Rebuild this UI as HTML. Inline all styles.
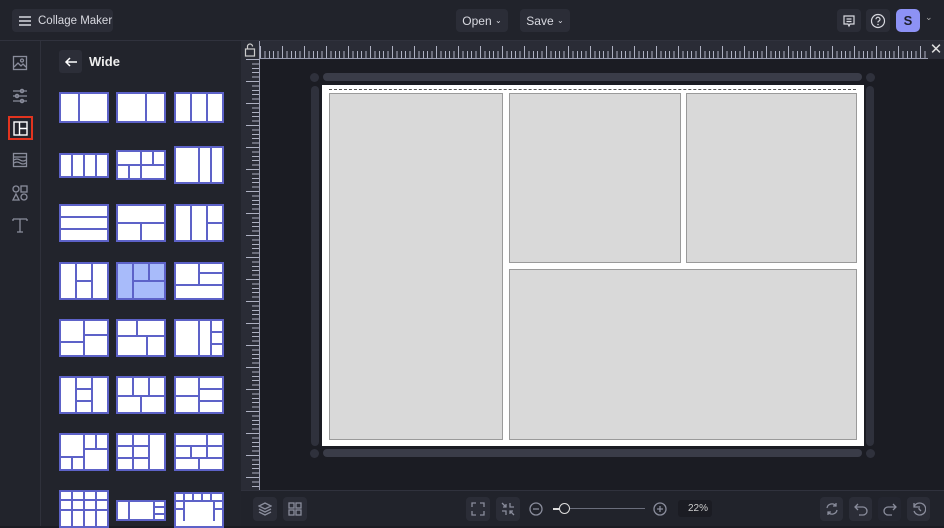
<!DOCTYPE html><html><head><meta charset="utf-8"><style>
*{margin:0;padding:0;box-sizing:border-box}
body{width:944px;height:526px;overflow:hidden;background:#1b1c23;font-family:"Liberation Sans",sans-serif;position:relative;color:#e6e7ee}
.a{position:absolute}
.btn{position:absolute;background:#2b2d37;border-radius:4px;font-size:12px;color:#d8d9e0;display:flex;align-items:center;justify-content:center;white-space:nowrap}
svg.t{position:absolute}
svg.t rect,svg.t path{stroke:#5d62c8;stroke-width:2;fill:none}
svg.t rect{fill:#fff}
.ic{stroke:#8a8d9c;fill:none;stroke-width:1.3}
</style></head><body>
<div class="a" style="left:0;top:0;width:944px;height:41px;background:#21232b;border-bottom:1px solid #30323d"></div>
<div class="btn" style="left:12px;top:9px;width:101px;height:23px;justify-content:flex-start;padding-left:6px;font-size:11.5px">
<svg width="14" height="12" style="margin-right:6px"><path d="M1 2h12M1 6h12M1 10h12" stroke="#d8d9e0" stroke-width="1.4"/></svg>Collage Maker</div>
<div class="btn" style="left:456px;top:9px;width:52px;height:23px">Open&nbsp;<span style="font-size:8px">⌄</span></div>
<div class="btn" style="left:520px;top:9px;width:50px;height:23px">Save&nbsp;<span style="font-size:8px">⌄</span></div>
<div class="btn" style="left:837px;top:9px;width:24px;height:23px"><svg width="14" height="14"><path d="M2 2h10v8H8l-1 2-1-2H2z M4.5 5h5M4.5 7.5h5" stroke="#d8d9e0" stroke-width="1.2" fill="none"/></svg></div>
<div class="btn" style="left:866px;top:9px;width:24px;height:23px"><svg width="16" height="16"><circle cx="8" cy="8" r="6.5" stroke="#d8d9e0" stroke-width="1.2" fill="none"/><path d="M6 6.3a2 2 0 1 1 2.5 1.9c-.5.2-.5.6-.5 1.3" stroke="#d8d9e0" stroke-width="1.2" fill="none"/><circle cx="8" cy="11.5" r=".8" fill="#d8d9e0"/></svg></div>
<div class="a" style="left:896px;top:9px;width:24px;height:23px;background:#8d92f5;border-radius:5px;color:#1d1f2a;font-weight:bold;font-size:13px;text-align:center;line-height:23px">S</div>
<div class="a" style="left:925px;top:12px;font-size:9px;color:#aaa">⌄</div>
<div class="a" style="left:0;top:41px;width:41px;height:485px;background:#22242c;border-right:1px solid #2f313b"></div>
<svg class="a" style="left:12px;top:55px" width="16" height="16"><rect x="1.5" y="1.5" width="13" height="13" class="ic"/><path d="M2 12l4-4 3 3 2-2 3 3" class="ic"/><circle cx="10" cy="5.5" r="1.5" class="ic"/></svg>
<svg class="a" style="left:12px;top:88px" width="16" height="16"><path d="M1 3h14M1 8h14M1 13h14" class="ic"/><circle cx="10" cy="3" r="1.6" class="ic" fill="#22242c"/><circle cx="5" cy="8" r="1.6" class="ic" fill="#22242c"/><circle cx="10" cy="13" r="1.6" class="ic" fill="#22242c"/></svg>
<div class="a" style="left:8px;top:116px;width:25px;height:24px;border:2px solid #e2341f"></div>
<svg class="a" style="left:13px;top:121px" width="15" height="15"><rect x="1" y="1" width="13" height="13" stroke="#fff" stroke-width="1.4" fill="none"/><path d="M6.5 1v13M6.5 7.5H14" stroke="#fff" stroke-width="1.4"/></svg>
<svg class="a" style="left:12px;top:152px" width="16" height="16"><rect x="1.5" y="1.5" width="13" height="13" class="ic"/><path d="M2 5h12M2 8q3-2 6 0t6 0M2 11q3-2 6 0t6 0" class="ic"/></svg>
<svg class="a" style="left:12px;top:185px" width="16" height="16"><circle cx="4" cy="4" r="3" class="ic"/><rect x="9" y="1" width="6" height="6" class="ic"/><path d="M4 9l3 6H1z" class="ic"/><circle cx="12" cy="12" r="3" class="ic"/></svg>
<svg class="a" style="left:12px;top:217px" width="16" height="16"><path d="M1 2h14M1 2v2M15 2v2M8 2v13M5 15h6" class="ic"/></svg>
<div class="a" style="left:41px;top:41px;width:200px;height:485px;background:#22242c"></div>
<div class="a" style="left:59px;top:50px;width:23px;height:23px;background:#2c2e38;border-radius:3px"></div>
<svg class="a" style="left:64px;top:55px" width="14" height="14"><path d="M13 7H2M6 3L2 7l4 4" stroke="#fff" stroke-width="1.5" fill="none"/></svg>
<div class="a" style="left:89px;top:54px;font-size:13px;font-weight:bold;color:#eee">Wide</div>

<svg class="t" style="left:59px;top:92px" width="50" height="31"><rect x="1" y="1" width="48" height="29"/><path d="M20 1v29"/></svg>
<svg class="t" style="left:116px;top:92px" width="50" height="31"><rect x="1" y="1" width="48" height="29"/><path d="M30 1v29"/></svg>
<svg class="t" style="left:174px;top:92px" width="50" height="31"><rect x="1" y="1" width="48" height="29"/><path d="M17 1v29M33 1v29"/></svg>

<svg class="t" style="left:59px;top:153px" width="50" height="25"><rect x="1" y="1" width="48" height="23"/><path d="M13 1v23M25 1v23M37 1v23"/></svg>
<svg class="t" style="left:116px;top:150px" width="50" height="30"><rect x="1" y="1" width="48" height="28"/><path d="M1 15h48M25 1v28M37 1v14M13 15v14"/></svg>
<svg class="t" style="left:174px;top:146px" width="50" height="38"><rect x="1" y="1" width="48" height="36"/><path d="M25 1v36M37 1v36"/></svg>

<svg class="t" style="left:59px;top:204px" width="50" height="38"><rect x="1" y="1" width="48" height="36"/><path d="M1 13h48M1 25h48"/></svg>
<svg class="t" style="left:116px;top:204px" width="50" height="38"><rect x="1" y="1" width="48" height="36"/><path d="M1 19h48M25 19v18"/></svg>
<svg class="t" style="left:174px;top:204px" width="50" height="38"><rect x="1" y="1" width="48" height="36"/><path d="M17 1v36M33 1v36M33 19h16"/></svg>

<svg class="t" style="left:59px;top:262px" width="50" height="38"><rect x="1" y="1" width="48" height="36"/><path d="M17 1v36M33 1v36M17 19h16"/></svg>
<svg class="t" style="left:116px;top:262px" width="50" height="38"><rect x="1" y="1" width="48" height="36" style="fill:#a8bbfa"/><path d="M17 1v36M33 1v18M17 19h32"/></svg>
<svg class="t" style="left:174px;top:262px" width="50" height="38"><rect x="1" y="1" width="48" height="36"/><path d="M1 23h48M25 1v22M25 11h24"/></svg>

<svg class="t" style="left:59px;top:319px" width="50" height="38"><rect x="1" y="1" width="48" height="36"/><path d="M25 1v36M1 23h24M25 16h24"/></svg>
<svg class="t" style="left:116px;top:319px" width="50" height="38"><rect x="1" y="1" width="48" height="36"/><path d="M1 17h48M21 1v16M31 17v20"/></svg>
<svg class="t" style="left:174px;top:319px" width="50" height="38"><rect x="1" y="1" width="48" height="36"/><path d="M25 1v36M37 1v36M37 13h12M37 25h12"/></svg>

<svg class="t" style="left:59px;top:376px" width="50" height="38"><rect x="1" y="1" width="48" height="36"/><path d="M17 1v36M33 1v36M17 13h16M17 25h16"/></svg>
<svg class="t" style="left:116px;top:376px" width="50" height="38"><rect x="1" y="1" width="48" height="36"/><path d="M1 20h48M17 1v19M33 1v19M25 20v17"/></svg>
<svg class="t" style="left:174px;top:376px" width="50" height="38"><rect x="1" y="1" width="48" height="36"/><path d="M25 1v36M25 13h24M25 25h24M1 20h24"/></svg>

<svg class="t" style="left:59px;top:433px" width="50" height="38"><rect x="1" y="1" width="48" height="36"/><path d="M25 1v36M1 24h24M25 16h24M37 1v15M13 24v13"/></svg>
<svg class="t" style="left:116px;top:433px" width="50" height="38"><rect x="1" y="1" width="48" height="36"/><path d="M33 1v36M17 1v36M1 13h32M1 25h32"/></svg>
<svg class="t" style="left:174px;top:433px" width="50" height="38"><rect x="1" y="1" width="48" height="36"/><path d="M1 13h48M1 25h48M17 13v12M33 13v12M25 25v12M33 1v12"/></svg>

<svg class="t" style="left:59px;top:490px" width="50" height="38"><rect x="1" y="1" width="48" height="36"/><path d="M13 1v36M25 1v36M37 1v36M1 10h48M1 20h48"/></svg>
<svg class="t" style="left:116px;top:500px" width="50" height="21"><rect x="1" y="1" width="48" height="19"/><path d="M13 1v19M38 1v19M38 7h11M38 14h11"/></svg>
<svg class="t" style="left:174px;top:492px" width="50" height="36"><rect x="1" y="1" width="48" height="34"/><path d="M10 1v8M19 1v8M28 1v8M37 1v8M1 9h48M10 9v20M40 9v20M1 17h9M40 17h9"/></svg>

<div class="a" style="left:241px;top:41px;width:703px;height:18px;background:#2a2c36;border-bottom:1px solid #9a9db0"></div>
<div class="a" style="left:241px;top:41px;width:19px;height:449px;background:#2a2c36;border-right:1px solid #9a9db0"></div>
<div class="a" style="left:260px;top:51px;width:666px;height:7px;background:repeating-linear-gradient(90deg,#aeb1c2 0 1px,transparent 1px 4.4px)"></div>
<div class="a" style="left:260px;top:46px;width:666px;height:12px;background:repeating-linear-gradient(90deg,#aeb1c2 0 1px,transparent 1px 22px)"></div>
<div class="a" style="left:252px;top:59px;width:7px;height:431px;background:repeating-linear-gradient(180deg,#aeb1c2 0 1px,transparent 1px 4.4px)"></div>
<div class="a" style="left:246px;top:59px;width:13px;height:431px;background:repeating-linear-gradient(180deg,#aeb1c2 0 1px,transparent 1px 22px)"></div>
<svg class="a" style="left:244px;top:43px" width="12" height="14"><rect x="1.5" y="6" width="9" height="7" stroke="#ccc" fill="none" stroke-width="1.2"/><path d="M3.5 6V3.5a2.5 2.5 0 0 1 5 0" stroke="#ccc" fill="none" stroke-width="1.2"/></svg>
<div class="a" style="left:928px;top:41px;width:16px;height:18px;background:#2a2c36;color:#ddd;font-size:15px;text-align:center;line-height:17px">✕</div>
<div class="a" style="left:323px;top:73px;width:539px;height:8px;border-radius:4px;background:#3a3c48"></div>
<div class="a" style="left:323px;top:449px;width:539px;height:8px;border-radius:4px;background:#3a3c48"></div>
<div class="a" style="left:311px;top:86px;width:8px;height:360px;border-radius:4px;background:#2f313c"></div>
<div class="a" style="left:866px;top:86px;width:8px;height:360px;border-radius:4px;background:#2f313c"></div>
<div class="a" style="left:310px;top:73px;width:9px;height:9px;border-radius:50%;background:#2f313c"></div>
<div class="a" style="left:866px;top:73px;width:9px;height:9px;border-radius:50%;background:#2f313c"></div>
<div class="a" style="left:310px;top:449px;width:9px;height:9px;border-radius:50%;background:#2f313c"></div>
<div class="a" style="left:866px;top:449px;width:9px;height:9px;border-radius:50%;background:#2f313c"></div>
<div class="a" style="left:322px;top:85px;width:542px;height:361px;background:#fff"></div>
<div class="a" style="left:329px;top:89px;width:527px;border-top:1px dashed #555"></div>
<div class="a" style="left:329px;top:93px;width:174px;height:347px;background:#d9d9d9;border:1px solid #9a9a9a"></div>
<div class="a" style="left:509px;top:93px;width:172px;height:170px;background:#d9d9d9;border:1px solid #9a9a9a"></div>
<div class="a" style="left:686px;top:93px;width:171px;height:170px;background:#d9d9d9;border:1px solid #9a9a9a"></div>
<div class="a" style="left:509px;top:269px;width:348px;height:171px;background:#d9d9d9;border:1px solid #9a9a9a"></div>
<div class="a" style="left:241px;top:490px;width:703px;height:36px;background:#21232b;border-top:1px solid #30323d"></div>
<div class="btn" style="left:253px;top:497px;width:24px;height:24px"><svg width="14" height="14"><path d="M7 1l6 3-6 3-6-3zM1 7l6 3 6-3M1 10l6 3 6-3" class="ic" stroke="#bbb"/></svg></div>
<div class="btn" style="left:283px;top:497px;width:24px;height:24px"><svg width="14" height="14"><rect x="1" y="1" width="5" height="5" class="ic" stroke="#ccc"/><rect x="8" y="1" width="5" height="5" class="ic" stroke="#ccc"/><rect x="1" y="8" width="5" height="5" class="ic" stroke="#ccc"/><rect x="8" y="8" width="5" height="5" class="ic" stroke="#ccc"/></svg></div>
<div class="btn" style="left:466px;top:497px;width:24px;height:24px"><svg width="14" height="14"><path d="M1 5V1h4M9 1h4v4M13 9v4H9M5 13H1V9" class="ic" stroke="#ddd"/></svg></div>
<div class="btn" style="left:496px;top:497px;width:24px;height:24px"><svg width="14" height="14"><path d="M1 1l4 4M5 2v3H2M13 13l-4-4M9 12V9h3M9 1v4h4M5 13V9H1" class="ic" stroke="#ddd"/></svg></div>
<svg class="a" style="left:529px;top:502px" width="14" height="14"><circle cx="7" cy="7" r="6" class="ic" stroke="#ddd"/><path d="M4 7h6" class="ic" stroke="#ddd"/></svg>
<div class="a" style="left:553px;top:508px;width:92px;height:1px;background:#6b6e7c"></div>
<div class="a" style="left:553px;top:508px;width:8px;height:1.5px;background:#ddd"></div>
<div class="a" style="left:559px;top:503px;width:11px;height:11px;border-radius:50%;border:1.5px solid #ddd;background:#21232b"></div>
<svg class="a" style="left:653px;top:502px" width="14" height="14"><circle cx="7" cy="7" r="6" class="ic" stroke="#ddd"/><path d="M4 7h6M7 4v6" class="ic" stroke="#ddd"/></svg>
<div class="a" style="left:678px;top:500px;width:34px;height:17px;background:#1b1c23;border-radius:3px;font-size:10px;color:#ccc;text-align:right;padding-right:4px;line-height:17px">22%</div>
<div class="btn" style="left:820px;top:497px;width:23px;height:24px"><svg width="14" height="14"><path d="M2 6a5 5 0 0 1 9-2M12 8a5 5 0 0 1-9 2M11 1v3H8M3 13v-3h3" class="ic" stroke="#ddd"/></svg></div>
<div class="btn" style="left:849px;top:497px;width:23px;height:24px"><svg width="14" height="14"><path d="M4 2L1 5l3 3M1 5h8a4 4 0 0 1 0 8H5" class="ic" stroke="#ddd"/></svg></div>
<div class="btn" style="left:878px;top:497px;width:23px;height:24px;background:#242630"><svg width="14" height="14"><path d="M10 2l3 3-3 3M13 5H5a4 4 0 0 0 0 8h4" class="ic" stroke="#555"/></svg></div>
<div class="btn" style="left:907px;top:497px;width:23px;height:24px"><svg width="14" height="14"><path d="M2 5a6 6 0 1 1 0 4M2 1v4h4M7 4v3l2 2" class="ic" stroke="#ddd"/></svg></div>
</body></html>
